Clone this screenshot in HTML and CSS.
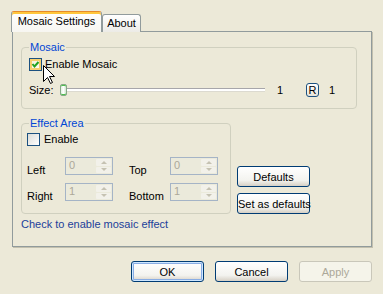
FILE: index.html
```html
<!DOCTYPE html>
<html lang="en">
<head>
    <meta charset="UTF-8">
    <title>Mosaic Settings</title>
    <link rel="stylesheet" href="styles.css">
</head>
<body>
    <div class="dialog">
        <div class="tabs">
            <div class="tab active">Mosaic Settings</div>
            <div class="tab">About</div>
        </div>

        <div class="panel">
            <fieldset class="group mosaic">
                <legend>Mosaic</legend>
                <label class="check-row">
                    <span class="check hover">
                        <svg width="11" height="11" viewBox="0 0 11 11"><path d="M2.5 5 L4.5 7.5 L8.5 3" fill="none" stroke="#21a121" stroke-width="2"/></svg>
                    </span>
                    <span>Enable Mosaic</span>
                </label>
                <div class="size-row">
                    <span class="size-label">Size:</span>
                    <div class="slider"><span class="thumb"></span></div>
                    <span class="size-val">1</span>
                    <span class="r-btn">R</span>
                    <span class="r-val">1</span>
                </div>
            </fieldset>

            <div class="area-row">
                <fieldset class="group area">
                    <legend>Effect Area</legend>
                    <label class="check-row">
                        <span class="check"></span>
                        <span>Enable</span>
                    </label>
                    <div class="coord-row">
                        <span class="coord-label">Left</span>
                        <div class="spin"><span class="spin-val">0</span><span class="spin-btns"><i class="up"></i><i class="down"></i></span></div>
                        <span class="coord-label second">Top</span>
                        <div class="spin"><span class="spin-val">0</span><span class="spin-btns"><i class="up"></i><i class="down"></i></span></div>
                    </div>
                    <div class="coord-row">
                        <span class="coord-label">Right</span>
                        <div class="spin"><span class="spin-val">1</span><span class="spin-btns"><i class="up"></i><i class="down"></i></span></div>
                        <span class="coord-label second">Bottom</span>
                        <div class="spin"><span class="spin-val">1</span><span class="spin-btns"><i class="up"></i><i class="down"></i></span></div>
                    </div>
                </fieldset>
                <div class="side-buttons">
                    <button class="btn">Defaults</button>
                    <button class="btn">Set as defaults</button>
                </div>
            </div>

            <p class="hint">Check to enable mosaic effect</p>
        </div>

        <div class="actions">
            <button class="btn default">OK</button>
            <button class="btn">Cancel</button>
            <button class="btn" disabled>Apply</button>
        </div>

        <!-- mouse pointer over the checkbox -->
        <svg class="cursor" width="13" height="20" viewBox="0 0 13 20">
            <path d="M0.5 0.5 L0.5 16.5 L4.5 12.5 L7.5 18.5 L9.5 17.5 L6.5 11.5 L11.5 11.5 Z" fill="#fff" stroke="#000" stroke-width="1"/>
        </svg>
    </div>
</body>
</html>
```

FILE: styles.css
```css
* {
    margin: 0;
    padding: 0;
    box-sizing: border-box;
}

body {
    font-family: "Liberation Sans", Arial, sans-serif;
    font-size: 11px;
    line-height: 13px;
    color: #000;
    background: #ece9d8;
}

.dialog {
    position: relative;
    width: 383px;
    height: 294px;
    padding: 11px 11px 0 12px;
}

/* tabs */
.tabs {
    display: flex;
    align-items: flex-end;
    height: 21px;
    margin-left: -1px;
    margin-bottom: -1px;
}

.tab {
    border: 1px solid #919b9c;
    border-bottom: none;
    border-radius: 3px 3px 0 0;
    text-align: center;
    white-space: nowrap;
}

.tab.active {
    position: relative;
    z-index: 1;
    width: 91px;
    height: 21px;
    padding-top: 3px;
    border-top: 1px solid #e68b2c;
    box-shadow: inset 0 2px 0 #ffc73c;
    background: linear-gradient(#ffffff, #f7f6f1);
}

.tab:not(.active) {
    width: 39px;
    height: 18px;
    padding-top: 2px;
    background: linear-gradient(#ffffff, #ecebe6);
}

.panel {
    height: 216px;
    padding: 9px 0 0 8px;
    border: 1px solid #919b9c;
    box-shadow: 1px 1px 0 #c3c0ae;
    background: #ece9d8;
}

/* group boxes */
.group {
    border: 1px solid #d0d0bf;
    border-radius: 4px;
    min-width: 0;
}

.group legend {
    color: #0046d5;
    padding: 0 1px;
    line-height: 13px;
}

.mosaic {
    width: 336px;
    padding: 4px 7px 11px 7px;
}

.area {
    width: 210px;
    padding: 3px 5px 10px 5px;
}

.area legend {
    margin-left: 2px;
}

.check-row {
    display: flex;
    align-items: center;
    height: 13px;
}

.check {
    width: 13px;
    height: 13px;
    margin-right: 4px;
    border: 1px solid #1c5180;
    background: linear-gradient(135deg, #dcdcd7, #ffffff);
    display: flex;
}

.check.hover {
    box-shadow: inset 0 0 0 2px #f8cf6e;
    background: linear-gradient(135deg, #f3eed6, #fffdf5);
    margin-right: 3px;
}

.check svg {
    display: block;
}

/* size slider */
.size-row {
    display: flex;
    align-items: center;
    height: 14px;
    margin-top: 12px;
}

.size-label {
    width: 31px;
}

.slider {
    width: 207px;
    height: 12px;
    display: flex;
    align-items: center;
    background:
        linear-gradient(#a7a6aa, #a7a6aa) 2px 4px / 203px 1px no-repeat,
        linear-gradient(#ffffff, #ffffff) 2px 5px / 203px 2px no-repeat,
        linear-gradient(#dcdad0, #dcdad0) 2px 7px / 203px 1px no-repeat;
}

.thumb {
    width: 7px;
    height: 12px;
    border: 1px solid #86a886;
    border-radius: 2px;
    background: linear-gradient(to right, #e2f1e2, #ffffff 50%, #cfe6cf);
    box-shadow: inset 0 1px 0 #4fbf4f, inset 0 -1px 0 #4fbf4f;
}

.size-val {
    width: 6px;
    margin-left: 10px;
}

.r-btn {
    width: 13px;
    height: 14px;
    margin-left: 23px;
    border: 1px solid #1c5180;
    border-radius: 3px;
    background: linear-gradient(#ffffff, #e6e4da);
    text-align: center;
    line-height: 12px;
}

.r-val {
    margin-left: 10px;
}

/* effect area */
.area-row {
    display: flex;
    align-items: flex-start;
    margin-top: 8px;
}

.coord-row {
    display: flex;
    align-items: flex-start;
    height: 20px;
    margin-top: 11px;
}

.coord-row + .coord-row {
    margin-top: 6px;
}

.coord-label {
    width: 38px;
    margin-top: 7px;
}

.coord-label.second {
    width: 41px;
    margin-left: 16px;
}

.spin {
    width: 48px;
    height: 18px;
    display: flex;
    border: 1px solid #a5b4c6;
    background: #ebeadb;
}

.spin-val {
    flex: 1;
    padding: 1px 0 0 3px;
    color: #aca899;
}

.spin-btns {
    width: 15px;
    margin: 1px;
    display: flex;
    flex-direction: column;
    gap: 1px;
}

.spin-btns i {
    flex: 1;
    display: flex;
    align-items: center;
    justify-content: center;
    background: #f2f1ea;
    border-radius: 1px;
}

.spin-btns i::before {
    content: "";
    border-left: 3px solid transparent;
    border-right: 3px solid transparent;
}

.spin-btns .up::before {
    border-bottom: 3px solid #c5c2b2;
}

.spin-btns .down::before {
    border-top: 3px solid #c5c2b2;
}

.side-buttons {
    display: flex;
    flex-direction: column;
    gap: 6px;
    margin: 49px 0 0 6px;
}

.hint {
    margin-top: 4px;
    color: #21409a;
}

/* buttons */
.btn {
    width: 73px;
    height: 21px;
    padding: 0;
    font-family: inherit;
    font-size: 11px;
    color: #000;
    white-space: nowrap;
    border: 1px solid #003c74;
    border-radius: 3px;
    background: linear-gradient(#ffffff, #f3f3ef 70%, #d6d0c5);
}

.btn.default {
    box-shadow: inset 0 0 0 1px #cee7ff, inset 0 0 0 2px #89ade4;
}

.btn:disabled {
    color: #aca899;
    border-color: #c9c7ba;
    background: #f5f4ea;
}

.actions {
    display: flex;
    justify-content: flex-end;
    gap: 11px;
    margin-top: 14px;
    padding-right: 0;
}

.cursor {
    position: absolute;
    left: 43px;
    top: 65px;
}
```
